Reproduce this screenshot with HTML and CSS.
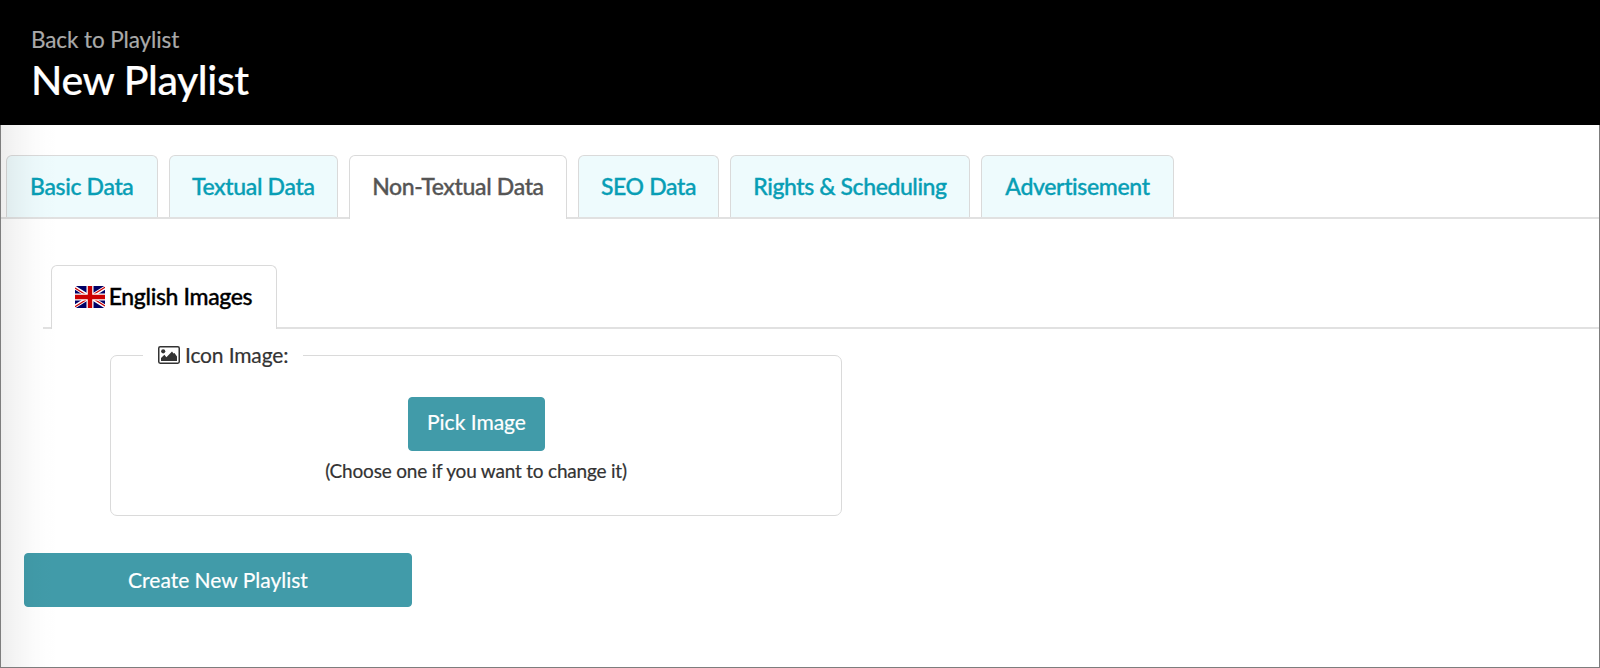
FILE: index.html
```
<!DOCTYPE html>
<html lang="en">
<head>
<meta charset="utf-8">
<title>New Playlist</title>
<link rel="stylesheet" href="styles.css">
</head>
<body>
<header class="header">
  <a class="back">Back to Playlist</a>
  <h1 class="title">New Playlist</h1>
</header>
<main class="content">
  <nav class="tabs">
    <a class="tab tab-basic"><span>Basic Data</span></a>
    <a class="tab tab-textual"><span>Textual Data</span></a>
    <a class="tab tab-media active"><span>Non-Textual Data</span></a>
    <a class="tab tab-seo"><span>SEO Data</span></a>
    <a class="tab tab-rights"><span>Rights &amp; Scheduling</span></a>
    <a class="tab tab-ads"><span>Advertisement</span></a>
  </nav>
  <nav class="tabs subtabs">
    <a class="tab tab-lang active">
      <svg class="flag" viewBox="0 0 30 22" width="30" height="22">
        <rect width="30" height="22" fill="#006"/>
        <path d="M-1 1L31 21M31 1L-1 21" stroke="#fff" stroke-width="3.6"/>
        <path d="M0 2L12 9.6M30 20L18 12.4M30 1.2L18 8.8M0 20.8L12 13.2" stroke="#c00" stroke-width="1.2"/>
        <path d="M15 0V22M0 11H30" stroke="#fff" stroke-width="7"/>
        <path d="M15 0V22M0 11H30" stroke="#c00" stroke-width="4.4"/>
      </svg>
      <span>English Images</span>
    </a>
  </nav>
  <fieldset class="panel">
    <legend class="legend">
      <svg class="picture" viewBox="0 0 22 18" width="22" height="18">
        <rect x="0.75" y="0.75" width="20.5" height="16.5" rx="1.4" fill="none" stroke="#333" stroke-width="1.5"/>
        <circle cx="5.2" cy="5.3" r="2.1" fill="#333"/>
        <path d="M3 15V12L6.4 8.8L8.4 11.2L14 5.5L15.5 7.5L16.5 7L19 10.5V15Z" fill="#333"/>
      </svg>
      <span>Icon Image:</span>
    </legend>
    <button class="button pick">Pick Image</button>
    <p class="hint">(Choose one if you want to change it)</p>
  </fieldset>
  <button class="button create">Create New Playlist</button>
</main>
</body>
</html>
```
FILE: styles.css
```
* { box-sizing: border-box; }
body {
  margin: 0;
  height: 668px;
  overflow: hidden;
  display: flex;
  flex-direction: column;
  font-family: Lato, sans-serif;
  font-variant-ligatures: none;
  color: #333;
  background: #fff;
  -webkit-text-stroke: .2px currentColor;
}
.header {
  height: 125px;
  flex: none;
  padding: 26px 0 0 31px;
  background: #000;
}
.back {
  display: block;
  font-size: 22.5px;
  line-height: 28px;
  letter-spacing: -.1px;
  color: #aaa;
}
.title {
  margin: 2px 0 0;
  font-size: 41px;
  line-height: 48px;
  font-weight: 500;
  letter-spacing: -.37px;
  -webkit-text-stroke-width: .2px;
  color: #fff;
}
.content {
  position: relative;
  flex: 1;
  padding-top: 30px;
}
.content::after {
  content: "";
  position: absolute;
  inset: 0;
  border: 1px solid #7d7d7d;
  border-top: 0;
  background: linear-gradient(90deg, rgba(0,0,0,.07), rgba(0,0,0,.045) 14px, rgba(0,0,0,.014) 32px, rgba(0,0,0,.005) 46px, transparent 62px);
  pointer-events: none;
}
.tabs {
  display: flex;
  gap: 11px;
  height: 64px;
  padding-left: 6px;
  border-bottom: 2px solid #e1e1e1;
}
.tab {
  display: flex;
  justify-content: center;
  height: 62px;
  padding-top: 16px;
  border: 1px solid #dadada;
  border-bottom: 0;
  border-radius: 6px 6px 0 0;
  background: #eefbfd;
  color: #089eb5;
  font-size: 23px;
  line-height: 28px;
  font-weight: 500;
  letter-spacing: -.35px;
  -webkit-text-stroke-width: .35px;
  white-space: nowrap;
}
.tab.active {
  height: 64px;
  background: #fff;
  color: #555;
}
.tab-basic { width: 151.5px; }
.tab-textual { width: 169.5px; }
.tab-media { width: 218px; }
.tab-seo { width: 141px; }
.tab-rights { width: 240px; }
.tab-rights span { letter-spacing: -.42px; }
.tab-ads { width: 193px; }
.subtabs {
  margin: 46px 0 0 43px;
  padding-left: 8px;
}
.tab.tab-lang {
  width: 226px;
  gap: 4px;
  padding-right: 1px;
  color: #000;
}
.flag { margin-top: 4px; }
.panel {
  width: 732px;
  height: 174px;
  margin: 13px 0 0 110px;
  padding: 29px 0 0 32px;
  border: 1px solid #dadada;
  border-radius: 7px;
}
.legend {
  display: flex;
  align-items: center;
  gap: 5px;
  width: 160px;
  height: 26px;
  padding: 0 0 0 15px;
  font-size: 21px;
  line-height: 26px;
  letter-spacing: -.15px;
  white-space: nowrap;
}
.button {
  display: block;
  height: 54px;
  border: 1px solid #419ba9;
  border-radius: 4px;
  background: #419ba9;
  color: #fff;
  font-family: inherit;
  font-size: 21px;
  line-height: 26px;
}
.pick {
  width: 137px;
  margin: 0 0 0 265px;
  padding: 0 0 4px;
}
.hint {
  margin: 8px 0 0;
  padding-right: 32px;
  font-size: 19px;
  line-height: 24px;
  letter-spacing: -.2px;
  text-align: center;
}
.create {
  width: 388px;
  margin: 37px 0 0 24px;
}
```
